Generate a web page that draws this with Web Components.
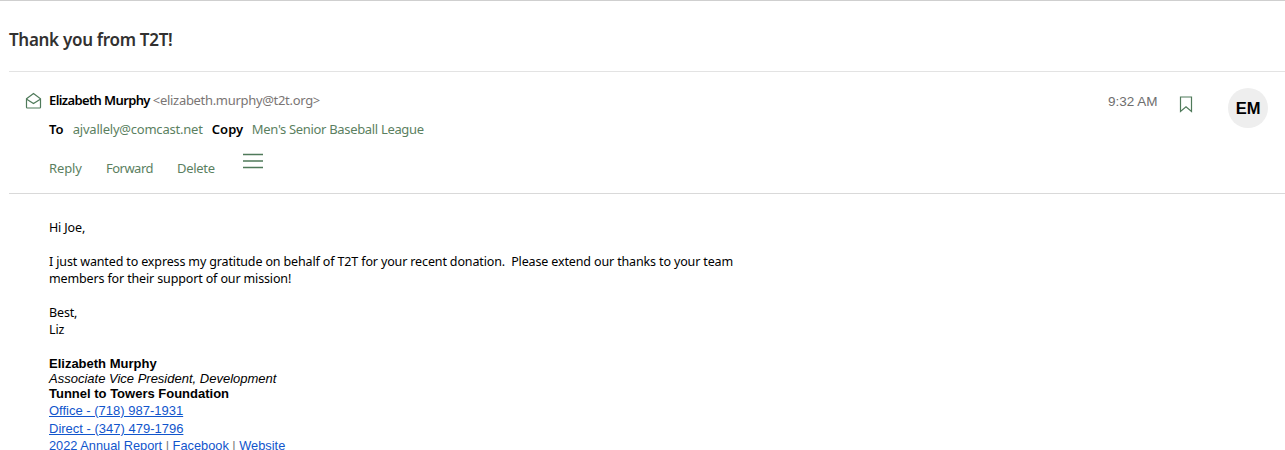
<!DOCTYPE html>
<html>
<head>
<meta charset="utf-8">
<title>Thank you from T2T!</title>
<style>
  html, body { margin: 0; padding: 0; height: 450px; overflow: hidden; background: #fff; }
</style>
</head>
<body>
<mail-view></mail-view>

<script>
const GREEN = '#4f7a5a';

class MailSubject extends HTMLElement {
  constructor() {
    super();
    this.attachShadow({ mode: 'open' }).innerHTML = `
      <style>
        :host { display: block; height: 70px; box-sizing: border-box; padding: 27px 0 0 9px; }
        h1 { margin: 0; font: 600 17px/24px "Noto Sans", sans-serif; color: #323130; letter-spacing: -0.3px; }
      </style>
      <h1><slot></slot></h1>`;
  }
}

class MailAction extends HTMLElement {
  constructor() {
    super();
    this.attachShadow({ mode: 'open' }).innerHTML = `
      <style>
        :host { display: block; font: 13px/18px "Noto Sans", sans-serif; color: #5b7f5f; letter-spacing: -0.3px; }
      </style>
      <slot></slot>`;
  }
}

class MailHeader extends HTMLElement {
  constructor() {
    super();
    this.attachShadow({ mode: 'open' }).innerHTML = `
      <style>
        :host {
          display: grid; grid-template-columns: 40px 1fr auto; margin-left: 9px; height: 121px;
          border-top: 1px solid #e3e3e3; border-bottom: 1px solid #d9d9d9;
          font: 13px/18px "Noto Sans", sans-serif; box-sizing: content-box;
        }
        .icon { padding: 20px 0 0 16px; }
        .icon svg, .side svg { display: block; }
        .line { display: flex; align-items: baseline; white-space: nowrap; }
        .from { padding-top: 19px; }
        b { font-weight: 600; color: #000; }
        .name { letter-spacing: -0.62px; }
        .addr { color: #7a7574; margin-left: 3px; letter-spacing: -0.31px; }
        .rcpt { margin-top: 11px; }
        .rcpt span { color: #5b7f5f; }
        .to { margin: 0 9px; letter-spacing: -0.22px; }
        .copy { margin-left: 8.5px; letter-spacing: -0.33px; }
        .rcpt b { letter-spacing: 0.1px; }
        .actions { display: flex; gap: 24px; margin-top: 21px; align-items: flex-start; }
        .menu { margin: -6px 0 0 4px; }
        .side { display: flex; align-items: flex-start; padding: 16px 17px 0 0; }
        .time { font: 13.5px/18px "Liberation Sans", sans-serif; color: #6e6e6e; margin: 5px 0 0; width: 50px; }
        .mark { margin: 8px 0 0 21px; }
        .avatar {
          width: 40px; height: 40px; border-radius: 50%; background: #eeeeee; margin-left: 35px;
          display: grid; place-items: center; font: 700 16.5px "Liberation Sans", sans-serif; color: #000;
        }
      </style>
      <div class="icon">
        <svg width="17" height="17" viewBox="0 0 17 17" fill="none" stroke="${GREEN}" stroke-width="1.2">
          <path d="M1.500 6.800 8.500 1.500l7 5.300v8.400a.8.8 0 0 1-.8.8H2.300a.8.8 0 0 1-.8-.8z"/>
          <path d="M1.700 7.200 8.500 11.500l6.800-4.300"/>
        </svg>
      </div>
      <div>
        <div class="line from"><b class="name">Elizabeth Murphy</b><span class="addr">&lt;elizabeth.murphy@t2t.org&gt;</span></div>
        <div class="line rcpt"><b>To</b><span class="to">ajvallely@comcast.net</span><b>Copy</b><span class="copy">Men's Senior Baseball League</span></div>
        <div class="actions">
          <mail-action style="letter-spacing:-.1px">Reply</mail-action>
          <mail-action style="letter-spacing:-.5px">Forward</mail-action>
          <mail-action>Delete</mail-action>
          <svg class="menu" width="20" height="16" viewBox="0 0 20 16" fill="none" stroke="${GREEN}" stroke-width="1.4">
            <path d="M0 1.500h20M0 8h20M0 14.500h20"/>
          </svg>
        </div>
      </div>
      <div class="side">
        <div class="time">9:32 AM</div>
        <svg class="mark" width="14" height="17" viewBox="0 0 14 17" fill="none" stroke="${GREEN}" stroke-width="1.2">
          <path d="M1.500 1h11v14.500L7 10.800 1.500 15.500z"/>
        </svg>
        <div class="avatar">EM</div>
      </div>`;
  }
}

class MailBody extends HTMLElement {
  constructor() {
    super();
    this.attachShadow({ mode: 'open' }).innerHTML = `
      <style>
        :host { display: block; padding: 25px 0 0 49px; font: 12.5px/17px "Noto Sans", sans-serif; color: #000; letter-spacing: -0.14px; }
        p { margin: 0 0 17px; white-space: pre; }
        .sig { font: 13px/15px "Liberation Sans", sans-serif; letter-spacing: 0; margin-top: 18px; white-space: nowrap; }
        .sig .link { line-height: 17.5px; }
        .sig .first { margin-top: 1px; }
        .sig .last { font-size: 12.8px; }
        a { color: #1155cc; }
        .plain { text-decoration: none; }
        .sep { color: #7a7a7a; }
      </style>
      <p>Hi Joe,</p>
      <p>I just wanted to express my gratitude on behalf of T2T for your recent donation.  Please extend our thanks to your team
members for their support of our mission!</p>
      <p>Best,
Liz</p>
      <div class="sig">
        <div><b>Elizabeth Murphy</b></div>
        <div><i>Associate Vice President, Development</i></div>
        <div><b>Tunnel to Towers Foundation</b></div>
        <div class="link first"><a href="#">Office - (718) 987-1931</a></div>
        <div class="link"><a href="#">Direct - (347) 479-1796</a></div>
        <div class="link last"><a class="plain" href="#">2022 Annual Report</a> <span class="sep">|</span> <a class="plain" href="#">Facebook</a> <span class="sep">|</span> <a class="plain" href="#">Website</a></div>
      </div>`;
  }
}

class MailView extends HTMLElement {
  constructor() {
    super();
    this.attachShadow({ mode: 'open' }).innerHTML = `
      <style>
        :host { display: block; border-top: 1px solid #cfcfcf; }
      </style>
      <mail-subject>Thank you from T2T!</mail-subject>
      <mail-header></mail-header>
      <mail-body></mail-body>`;
  }
}

customElements.define('mail-subject', MailSubject);
customElements.define('mail-action', MailAction);
customElements.define('mail-header', MailHeader);
customElements.define('mail-body', MailBody);
customElements.define('mail-view', MailView);
</script>
</body>
</html>
